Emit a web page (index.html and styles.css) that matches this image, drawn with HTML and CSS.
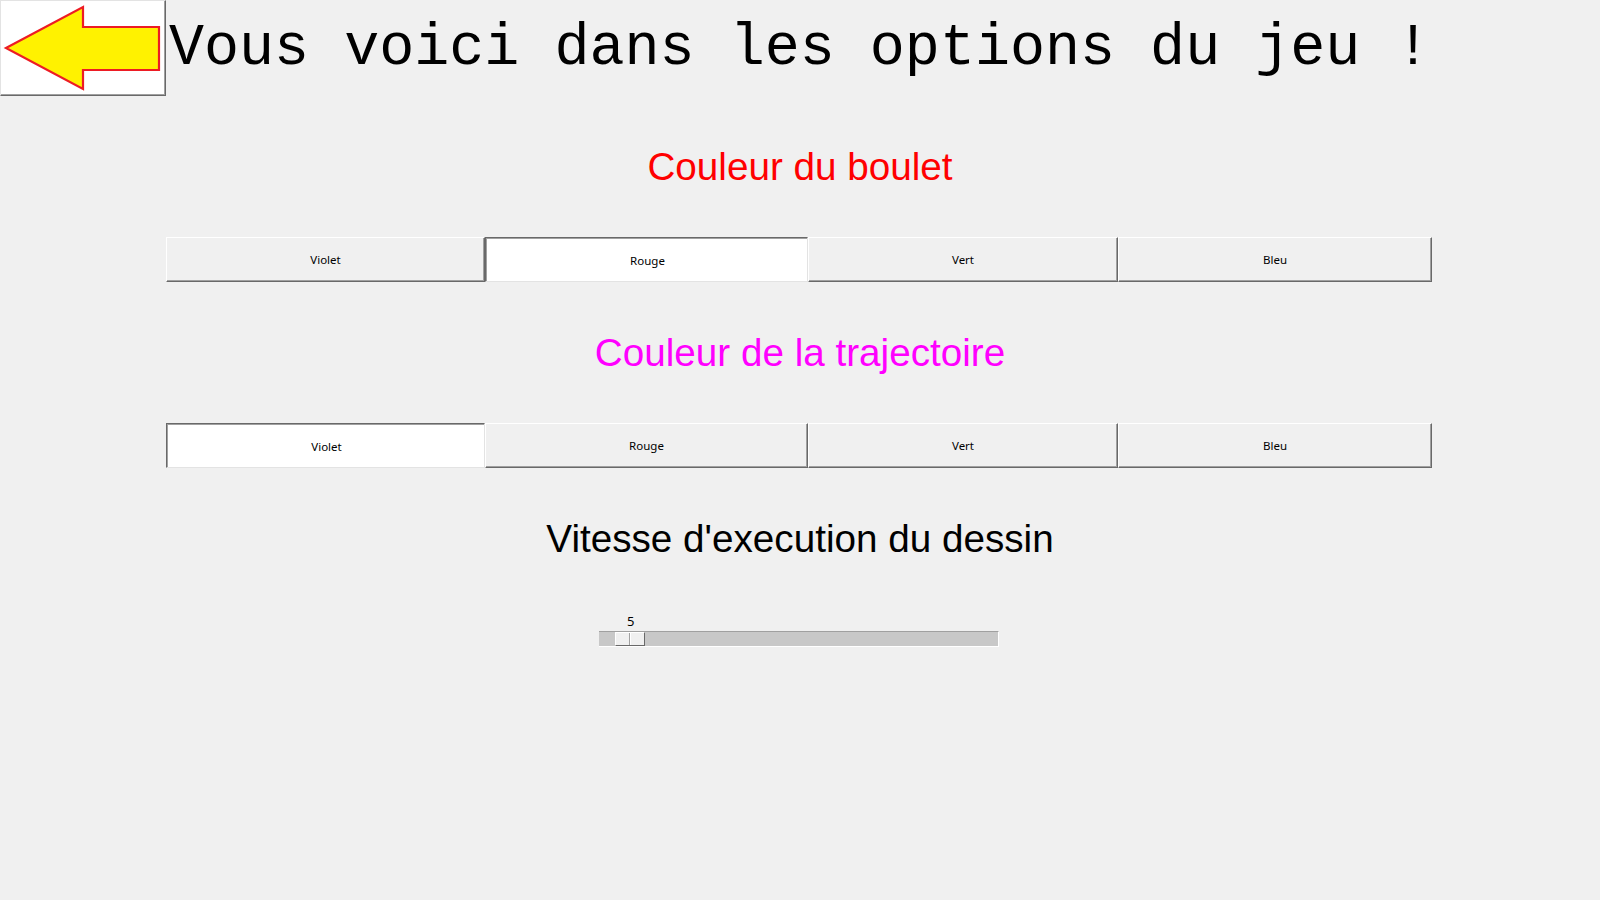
FILE: index.html
```html
<!DOCTYPE html>
<html lang="fr">
<head>
<meta charset="utf-8">
<title>Options du jeu</title>
<link rel="stylesheet" href="styles.css">
</head>
<body>
<div class="page">
  <div class="header">
    <button class="back" type="button" aria-label="Retour">
      <svg width="162" height="92" viewBox="0 0 162 92">
        <polygon points="4,46 81,5 81,25 157,25 157,68 81,68 81,87" fill="#fff200" stroke="#ed1c24" stroke-width="2.2" stroke-linejoin="miter"/>
      </svg>
    </button>
    <div class="title">Vous voici dans les options du jeu !</div>
  </div>

  <div class="heading red">Couleur du boulet</div>
  <div class="choices">
    <div class="btn">Violet</div>
    <div class="btn sel">Rouge</div>
    <div class="btn">Vert</div>
    <div class="btn">Bleu</div>
  </div>

  <div class="heading magenta">Couleur de la trajectoire</div>
  <div class="choices">
    <div class="btn sel">Violet</div>
    <div class="btn">Rouge</div>
    <div class="btn">Vert</div>
    <div class="btn">Bleu</div>
  </div>

  <div class="heading">Vitesse d'execution du dessin</div>
  <div class="slider">
    <div class="value">5</div>
    <div class="trough"><div class="thumb"></div></div>
  </div>
</div>
</body>
</html>
```
FILE: styles.css
```css
html, body {
  margin: 0;
  padding: 0;
  background: #f0f0f0;
}
body {
  width: 1600px;
  height: 900px;
  overflow: hidden;
}
.page {
  display: flex;
  flex-direction: column;
  gap: 49px;
}
.header {
  display: flex;
  align-items: center;
  height: 96px;
}
.back {
  box-sizing: border-box;
  width: 166px;
  height: 96px;
  margin: 0;
  padding: 0;
  background: #fff;
  border: 1px solid;
  border-color: #e3e3e3 #696969 #696969 #e3e3e3;
  box-shadow: inset -1px -1px #a0a0a0;
  display: flex;
  align-items: center;
  justify-content: center;
  flex: none;
}
.back svg {
  display: block;
}
.title {
  margin-left: 3px;
  font-family: "Liberation Mono", "Courier New", monospace;
  font-size: 58.4px;
  color: #000;
  white-space: pre;
  line-height: 66px;
  margin-top: 1px;
}
.heading {
  font-family: "Liberation Sans", Arial, sans-serif;
  font-size: 38.67px;
  line-height: 43px;
  height: 43px;
  text-align: center;
  color: #000;
}
.red { color: #ff0000; }
.magenta { color: #ff00ff; }
.choices {
  margin-left: 166px;
  display: grid;
  grid-template-columns: 319px 323px 310px 314px;
  height: 45px;
}
.btn {
  box-sizing: border-box;
  height: 45px;
  display: flex;
  align-items: center;
  justify-content: center;
  font-family: "Noto Sans", "Segoe UI", sans-serif;
  font-size: 11.5px;
  color: #000;
  background: #f0f0f0;
  border: 1px solid;
  border-color: #ffffff #696969 #696969 #ffffff;
  box-shadow: inset -1px -1px #a0a0a0;
}
.btn.sel {
  background: #fff;
  border-color: #696969 #e3e3e3 #e3e3e3 #696969;
  box-shadow: inset 1px 1px #a0a0a0;
  padding-top: 2px;
  padding-left: 2px;
}
.slider {
  margin-left: 599px;
  width: 400px;
}
.value {
  height: 22px;
  padding-left: 28px;
  font-family: "Noto Sans", "Segoe UI", sans-serif;
  font-size: 13px;
  line-height: 24px;
  color: #000;
}
.trough {
  box-sizing: border-box;
  height: 16px;
  background: #c8c8c8;
  border-top: 1px solid #a0a0a0;
  border-bottom: 1px solid #fff;
  border-right: 1px solid #fff;
  padding-left: 16px;
  display: flex;
  align-items: stretch;
}
.thumb {
  box-sizing: border-box;
  width: 30px;
  border: 1px solid;
  border-color: #fff #696969 #696969 #fff;
  background: linear-gradient(to right, #f0f0f0 13px, #a0a0a0 13px, #a0a0a0 14px, #ffffff 14px, #ffffff 15px, #f0f0f0 15px);
}
```
